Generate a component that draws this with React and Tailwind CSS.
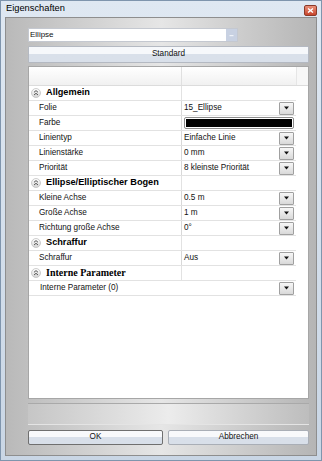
import React from 'react';

const rows = [
  { type: 'group', label: 'Allgemein' },
  { type: 'prop', label: 'Folie', value: '15_Ellipse', drop: true },
  { type: 'color', label: 'Farbe' },
  { type: 'prop', label: 'Linientyp', value: 'Einfache Linie', drop: true },
  { type: 'prop', label: 'Linienstärke', value: '0 mm', drop: true },
  { type: 'prop', label: 'Priorität', value: '8 kleinste Priorität', drop: true },
  { type: 'group', label: 'Ellipse/Elliptischer Bogen' },
  { type: 'prop', label: 'Kleine Achse', value: '0.5 m', drop: true },
  { type: 'prop', label: 'Große Achse', value: '1 m', drop: true },
  { type: 'prop', label: 'Richtung große Achse', value: '0°', drop: true },
  { type: 'group', label: 'Schraffur' },
  { type: 'prop', label: 'Schraffur', value: 'Aus', drop: true },
  { type: 'group', label: 'Interne Parameter', serif: true },
  { type: 'wide', label: 'Interne Parameter (0)' },
];

const DropButton = () => (
  <div className="flex items-center justify-center w-[15px] h-[13px] border border-[#a0a0a0] rounded-[1px] bg-gradient-to-b from-[#f7f7f7] to-[#d9d9d9]">
    <svg width="7" height="4" viewBox="0 0 7 4">
      <polygon points="1,0.5 6,0.5 3.5,3.5" fill="#111" />
    </svg>
  </div>
);

const Collapse = () => (
  <svg width="10" height="10" viewBox="0 0 10 10">
    <defs>
      <linearGradient id="cg" x1="0" y1="0" x2="0" y2="1">
        <stop offset="0" stopColor="#ffffff" />
        <stop offset="1" stopColor="#d4d4d4" />
      </linearGradient>
    </defs>
    <circle cx="5" cy="5" r="4.5" fill="url(#cg)" stroke="#c2c2c2" strokeWidth="0.8" />
    <polyline points="3,4.3 5,2.6 7,4.3" fill="none" stroke="#444" strokeWidth="0.9" />
    <polyline points="3,7 5,5.3 7,7" fill="none" stroke="#444" strokeWidth="0.9" />
  </svg>
);

const Row = ({ row }) => {
  if (row.type === 'group') {
    return (
      <div className="flex items-center h-[15px] border-b border-[#e2e2e2]">
        <div className="w-[152px] flex items-center h-full pl-[2px] gap-[5px]">
          <Collapse />
          <span
            className={
              row.serif
                ? "font-bold text-[10px] text-black font-['Liberation_Serif',serif]"
                : 'font-bold text-[9.2px] text-black'
            }
          >
            {row.label}
          </span>
        </div>
        <div className="flex-1 h-full border-l border-[#e2e2e2]" />
      </div>
    );
  }
  if (row.type === 'wide') {
    return (
      <div className="flex items-center h-[15px] border-b border-[#e2e2e2] pl-[11px] pr-[2px]">
        <span className="flex-1 text-[8.2px] text-[#111]">{row.label}</span>
        <DropButton />
      </div>
    );
  }
  return (
    <div className="flex items-center h-[15px] border-b border-[#e2e2e2]">
      <div className="w-[152px] h-full flex items-center pl-[10px] text-[8.2px] text-[#111]">
        {row.label}
      </div>
      <div className="flex-1 h-full flex items-center border-l border-[#d8d8d8] pl-[2px] pr-[2px]">
        {row.type === 'color' ? (
          <div className="flex-1 h-[12px] border border-[#8c8c8c] rounded-[2px] bg-white p-[1px]">
            <div className="w-full h-full bg-black" />
          </div>
        ) : (
          <>
            <span className="flex-1 text-[8.2px] text-[#111]">{row.value}</span>
            {row.drop && <DropButton />}
          </>
        )}
      </div>
    </div>
  );
};

const App = () => {
  return (
    <div className="w-[322px] h-[461px] flex flex-col border border-[#7f95ad] bg-gradient-to-b from-[#dfe8f2] to-[#c9d6e5] font-['Liberation_Sans',Arial,sans-serif] leading-none">
      <div className="h-[16px] flex items-center justify-between pl-[5px] pr-[4px]">
        <span className="text-[9.3px] text-black">Eigenschaften</span>
        <div className="w-[13px] h-[11px] mt-[3px] rounded-[2px] border border-[#8a3a2a] bg-gradient-to-b from-[#e8907a] to-[#c7432b] flex items-center justify-center">
          <svg width="7" height="5" viewBox="0 0 7 5">
            <path d="M1 0.5 L6 4.5 M6 0.5 L1 4.5" stroke="#fff" strokeWidth="1.4" />
          </svg>
        </div>
      </div>
      <div className="flex-1 mx-[4px] mb-[4px] border border-[#8e8e8e] flex flex-col pl-[22px] pr-[7px] pt-[10px] pb-[10px] bg-gradient-to-r from-[#b9b9b9] via-[#e6e6e6] to-[#b5b5b5]">
        <div className="w-[210px] h-[14px] flex border border-[#c4c8d0] bg-white">
          <span className="flex-1 pl-[1px] flex items-center text-[8px] text-[#111]">Ellipse</span>
          <div className="w-[11px] h-full bg-[#c8d1e2] flex items-center justify-center">
            <svg width="5" height="3" viewBox="0 0 5 3">
              <rect x="0.5" y="1" width="4" height="1.2" fill="#eef2f8" />
            </svg>
          </div>
        </div>
        <div className="mt-[4px] h-[17px] border border-[#b4b9c2] rounded-[1px] bg-gradient-to-b from-[#f6f8fb] from-50% to-[#d9e0ea] to-50% flex items-center justify-center text-[8.2px] text-[#111]">
          Standard
        </div>
        <div className="mt-[3px] flex-1 border border-[#a6a6a6] bg-white flex flex-col">
          <div className="flex h-[19px] border-b border-[#dcdcdc]">
            <div className="w-[152px] bg-gradient-to-b from-white to-[#f1f1f1]" />
            <div className="w-[115px] border-l border-[#e0e0e0] bg-gradient-to-b from-white to-[#f1f1f1]" />
            <div className="flex-1 border-l border-[#e6e6e6] bg-[#f7f7f7]" />
          </div>
          <div className="w-[267px]">
            {rows.map((row, i) => (
              <Row key={i} row={row} />
            ))}
          </div>
        </div>
        <div className="mt-[4px] h-[22px] border-t border-[#a9a9a9] border-b border-b-[#e4e4e4] bg-gradient-to-r from-[#c6c6c6] via-[#ececec] to-[#bdbdbd]" />
        <div className="mt-[5px] flex gap-[5px]">
          <div className="w-[135px] h-[15px] border border-[#6f6f6f] rounded-[2px] bg-gradient-to-b from-[#f8f9fb] from-50% to-[#d8dfe9] to-50% flex items-center justify-center text-[8.2px] text-[#111]">
            OK
          </div>
          <div className="flex-1 h-[15px] border border-[#a9aeb6] rounded-[2px] bg-gradient-to-b from-[#f8f9fb] from-50% to-[#d8dfe9] to-50% flex items-center justify-center text-[8.2px] text-[#111]">
            Abbrechen
          </div>
        </div>
      </div>
    </div>
  );
};

export default App;
